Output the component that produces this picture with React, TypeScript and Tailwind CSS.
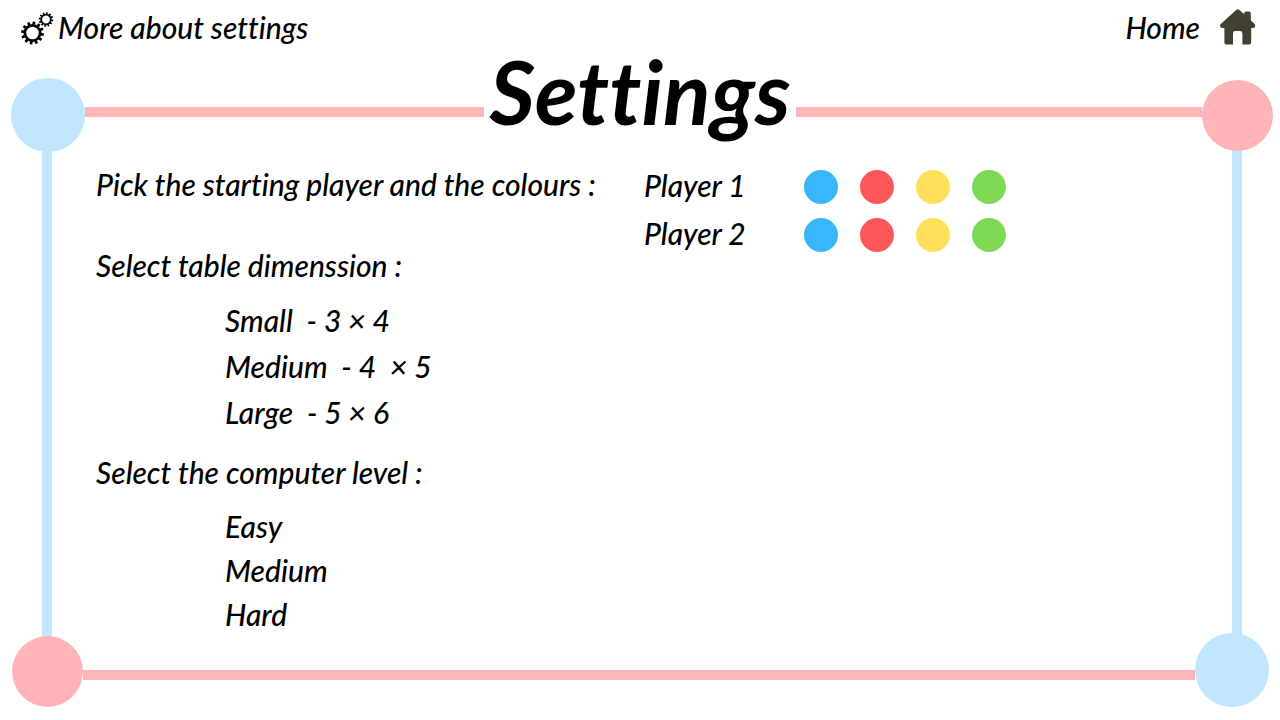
import React from "react";

type Swatch = { name: string; fill: string };

const swatches: Swatch[] = [
  { name: "Blue", fill: "bg-[#38b6ff]" },
  { name: "Red", fill: "bg-[#ff5757]" },
  { name: "Yellow", fill: "bg-[#ffde59]" },
  { name: "Green", fill: "bg-[#7ed957]" },
];

function Gear({ cx, cy, r }: { cx: number; cy: number; r: number }) {
  const teeth = Array.from({ length: 12 }, (_, i) => i * 30 + 8);
  return (
    <g transform={`translate(${cx} ${cy}) scale(${r / 10})`}>
      <circle r="6.9" fill="none" stroke="currentColor" strokeWidth="2.4" />
      {teeth.map((a) => (
        <path key={a} d="M-1.4 -7.6L-1.1 -10.4H1.1L1.4 -7.6Z" fill="currentColor" transform={`rotate(${a})`} />
      ))}
    </g>
  );
}

function GearsIcon() {
  return (
    <svg className="h-9 w-9 shrink-0" viewBox="0 0 36 36" aria-hidden="true">
      <Gear cx={12.5} cy={24} r={11} />
      <Gear cx={26} cy={10.5} r={7} />
    </svg>
  );
}

function HomeIcon() {
  return (
    <svg className="h-9 w-9 shrink-0 text-[#423f33]" viewBox="0 0 36 36" aria-hidden="true">
      <path
        fill="currentColor"
        d="M16.2 0.9Q17.8 -0.3 19.4 0.9L24.2 5.2V4.2Q24.2 2.4 26 2.4H28.9Q30.8 2.4 30.8 4.2V11.3L34.8 15.2Q36.2 18.4 33.2 18.9H31.2V33Q31.2 35.6 28.6 35.6H22.4V24.4Q22.4 22 20 22H15.2Q13 22 13 24.4V35.6H7Q4.4 35.6 4.4 33V18.9H2Q-1 18.4 0.5 15.2Z"
      />
    </svg>
  );
}

function PlayerRow({ label, name }: { label: string; name: string }) {
  return (
    <fieldset className="flex items-center">
      <legend className="float-left w-40 pb-1 leading-[30px]">{label}</legend>
      <div className="flex gap-[22px]">
        {swatches.map((s) => (
          <input
            key={s.name}
            type="radio"
            name={name}
            aria-label={`${label} ${s.name}`}
            className={`h-[34px] w-[34px] cursor-pointer appearance-none rounded-full ${s.fill}`}
          />
        ))}
      </div>
    </fieldset>
  );
}

export default function App() {
  return (
    <div className="flex min-h-screen flex-col bg-white pb-[13px] font-['Lato',sans-serif] text-[30px] leading-[30px] font-medium text-black italic [font-variant-ligatures:none]">
      <header className="flex h-[78px] items-start justify-between pt-[9px] pr-6 pl-5">
        <a href="#more" className="flex items-center gap-[2px]">
          <GearsIcon />
          <span>More about settings</span>
        </a>
        <a href="#home" className="flex items-center gap-5">
          <span>Home</span>
          <HomeIcon />
        </a>
      </header>

      <div className="relative z-10 flex h-[74px] items-end pr-[7px] pl-[11px]">
        <div className="h-[74px] w-[74px] rounded-full bg-[#c1e7ff]" />
        <div className="mt-[29px] h-2.5 flex-[399] self-start bg-[#fcb6b9]" />
        <h1 className="-mt-6 w-[312px] self-start text-center text-[88px] leading-[74px] font-bold">Settings</h1>
        <div className="mt-[29px] h-2.5 flex-[406] self-start bg-[#fcb6b9]" />
        <div className="mb-px h-[71px] w-[71px] rounded-full bg-[#ffb5b8]" />
      </div>

      <main className="flex flex-1 pr-[38px] pl-[42px]">
        <div className="-my-2 w-2.5 shrink-0 bg-[#c1e7ff]" />
        <div className="flex flex-1 items-start pt-[17px] pl-11">
          <div className="w-[548px] shrink-0">
            <h2>Pick the starting player and the colours :</h2>
            <section className="mt-[51px]">
              <h2>Select table dimenssion :</h2>
              <div className="mt-[25px] ml-[129px] flex flex-col items-start gap-4">
                <button type="button" className="whitespace-pre">{"Small  - 3 × 4"}</button>
                <button type="button" className="whitespace-pre">{"Medium  - 4  × 5"}</button>
                <button type="button" className="whitespace-pre">{"Large  - 5 × 6"}</button>
              </div>
            </section>
            <section className="mt-[30px]">
              <h2>Select the computer level :</h2>
              <div className="mt-6 ml-[129px] flex flex-col items-start gap-3.5">
                <button type="button">Easy</button>
                <button type="button">Medium</button>
                <button type="button">Hard</button>
              </div>
            </section>
          </div>
          <div className="flex flex-col gap-3.5 pt-px">
            <PlayerRow label="Player 1" name="player-1" />
            <PlayerRow label="Player 2" name="player-2" />
          </div>
        </div>
        <div className="-my-2 w-2.5 shrink-0 bg-[#c1e7ff]" />
      </main>

      <div className="relative flex h-[74px] items-end pr-[11px] pl-3">
        <div className="h-[71px] w-[71px] rounded-full bg-[#ffb5b8]" />
        <div className="mt-[37px] h-2.5 flex-1 self-start bg-[#fcb6b9]" />
        <div className="h-[74px] w-[74px] rounded-full bg-[#c1e7ff]" />
      </div>
    </div>
  );
}
